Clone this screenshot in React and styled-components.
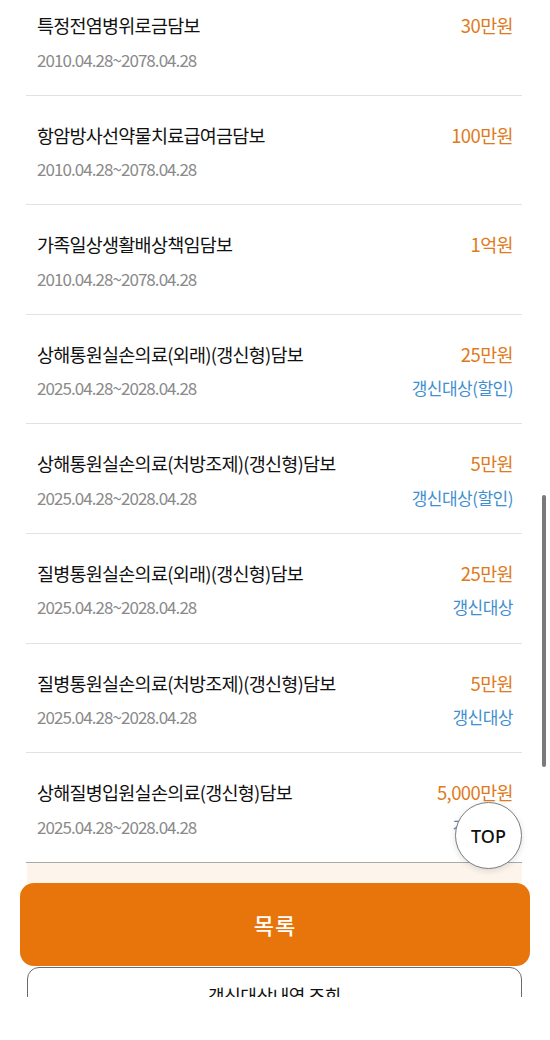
import React from 'react';
import styled, { createGlobalStyle } from 'styled-components';

const GlobalStyle = createGlobalStyle`
    html, body {
        margin: 0;
        padding: 0;
        background: #fff;
    }
    body {
        font-family: "Noto Sans CJK KR", "Noto Sans", sans-serif;
        -webkit-font-smoothing: antialiased;
    }
`;

const Screen = styled.div`
    position: relative;
    height: 997px;
    overflow: hidden;
    background: #fff;
`;

const List = styled.ul`
    list-style: none;
    margin: -14px 28px 0 26px;
    padding: 0;
`;

const Row = styled.li`
    box-sizing: border-box;
    height: 109.6px;
    padding: 26px 9px 0 11px;
    border-bottom: 1px solid ${({ last }) => (last ? '#a9a9a9' : '#e2e2e2')};
    display: grid;
    grid-template-columns: 1fr auto;
    grid-template-rows: 26px 22px;
    row-gap: 10px;
    align-items: center;
`;

const Title = styled.span`
    font-size: 18.5px;
    letter-spacing: -0.75px;
    color: #111;
`;

const Amount = styled.span`
    font-size: 18.5px;
    letter-spacing: -0.6px;
    color: #e07a1c;
    text-align: right;
`;

const Period = styled.span`
    font-size: 17px;
    letter-spacing: -0.95px;
    color: #8a8a8a;
`;

const Note = styled.span`
    font-size: 17px;
    letter-spacing: -0.5px;
    color: #3f8fd0;
    text-align: right;
`;

const Cream = styled.div`
    margin: 0 28px 0 27px;
    height: 20px;
    background: #fdf5ec;
`;

const Buttons = styled.div`
    display: flex;
    flex-direction: column;
    gap: 1px;
    padding: 0 20px;
`;

const MainButton = styled.button`
    height: 83px;
    border: none;
    border-radius: 14px;
    background: #e8750b;
    color: #fff;
    font-family: inherit;
    font-size: 22px;
    font-weight: 500;
    letter-spacing: 1px;
`;

const SubButton = styled.button`
    margin: 0 8px 0 7px;
    height: 56px;
    border: 1.5px solid #6b6b6b;
    border-radius: 12px;
    background: #fff;
    color: #111;
    font-family: inherit;
    font-size: 18px;
    letter-spacing: -0.4px;
`;

const TopButton = styled.button`
    position: absolute;
    top: 802px;
    left: 455px;
    width: 67px;
    height: 67px;
    border-radius: 50%;
    border: 1px solid #7d7d7d;
    background: #fff;
    box-shadow: 0 2px 6px rgba(0, 0, 0, .12);
    color: #111;
    font-family: "Noto Sans", sans-serif;
    font-size: 18px;
    font-weight: 500;
    padding: 0;
`;

const ScrollThumb = styled.div`
    position: absolute;
    top: 495px;
    left: 542px;
    width: 4px;
    height: 272px;
    border-radius: 2px;
    background: #7a7a7a;
`;

const items = [
    { name: '특정전염병위로금담보', amount: '30만원', period: '2010.04.28~2078.04.28' },
    { name: '항암방사선약물치료급여금담보', amount: '100만원', period: '2010.04.28~2078.04.28' },
    { name: '가족일상생활배상책임담보', amount: '1억원', period: '2010.04.28~2078.04.28' },
    { name: '상해통원실손의료(외래)(갱신형)담보', amount: '25만원', period: '2025.04.28~2028.04.28', note: '갱신대상(할인)' },
    { name: '상해통원실손의료(처방조제)(갱신형)담보', amount: '5만원', period: '2025.04.28~2028.04.28', note: '갱신대상(할인)' },
    { name: '질병통원실손의료(외래)(갱신형)담보', amount: '25만원', period: '2025.04.28~2028.04.28', note: '갱신대상' },
    { name: '질병통원실손의료(처방조제)(갱신형)담보', amount: '5만원', period: '2025.04.28~2028.04.28', note: '갱신대상' },
    { name: '상해질병입원실손의료(갱신형)담보', amount: '5,000만원', period: '2025.04.28~2028.04.28', note: '갱신대상' },
];

export default function App() {
    return (
        <Screen>
            <GlobalStyle />
            <List>
                {items.map((item, i) => (
                    <Row key={item.name} last={i === items.length - 1}>
                        <Title>{item.name}</Title>
                        <Amount>{item.amount}</Amount>
                        <Period>{item.period}</Period>
                        <Note>{item.note}</Note>
                    </Row>
                ))}
            </List>
            <Cream />
            <Buttons>
                <MainButton>목록</MainButton>
                <SubButton>갱신대상내역 조회</SubButton>
            </Buttons>
            <TopButton>TOP</TopButton>
            <ScrollThumb />
        </Screen>
    );
}
